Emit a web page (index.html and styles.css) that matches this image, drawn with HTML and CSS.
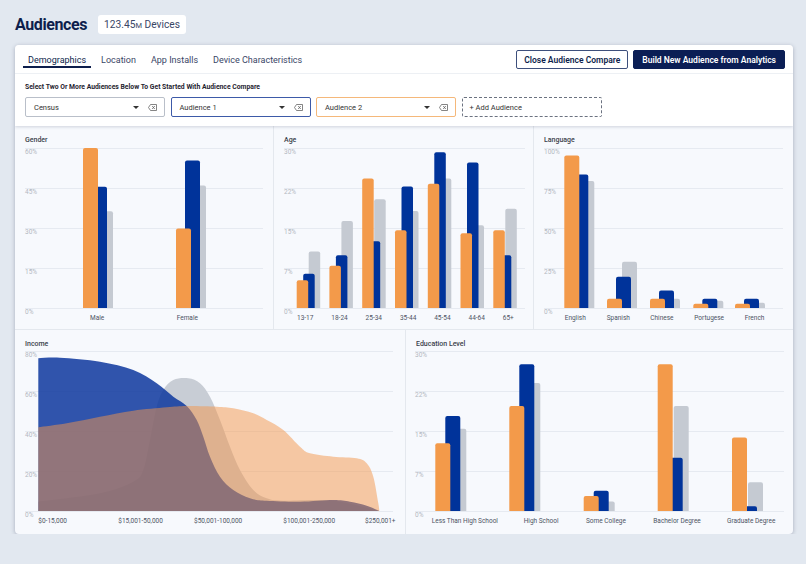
FILE: index.html
```html
<!DOCTYPE html>
<html lang="en">
<head>
    <meta charset="UTF-8">
    <meta name="viewport" content="width=device-width, initial-scale=1.0">
    <title>Audiences</title>
    <link rel="stylesheet" href="styles.css">
</head>
<body>
    <div class="page">
        <header class="top">
            <h1>Audiences</h1>
            <span class="badge">123.45<span class="unit">M</span> Devices</span>
        </header>

        <div class="card">
            <div class="controls">
                <div class="tabbar">
                    <nav class="tabs">
                        <a href="javascript:;" class="tab active">Demographics</a>
                        <a href="javascript:;" class="tab">Location</a>
                        <a href="javascript:;" class="tab">App Installs</a>
                        <a href="javascript:;" class="tab">Device Characteristics</a>
                    </nav>
                    <div class="actions">
                        <button class="btn btn-outline">Close Audience Compare</button>
                        <button class="btn btn-solid">Build New Audience from Analytics</button>
                    </div>
                </div>
                <div class="compare">
                    <p class="hint">Select Two Or More Audiences Below To Get Started With Audience Compare</p>
                    <div class="pickers">
                        <div class="picker">
                            <span class="picker-name">Census</span>
                            <span class="caret"></span>
                            <svg class="clear" width="9" height="7" viewBox="0 0 9 7"><path d="M2.5 0.5H8.5V6.5H2.5L0.5 3.5Z" fill="none" stroke="#666" stroke-width="0.8"/><path d="M4.2 2L6.8 5M6.8 2L4.2 5" stroke="#666" stroke-width="0.8"/></svg>
                        </div>
                        <div class="picker picker-blue">
                            <span class="picker-name">Audience 1</span>
                            <span class="caret"></span>
                            <svg class="clear" width="9" height="7" viewBox="0 0 9 7"><path d="M2.5 0.5H8.5V6.5H2.5L0.5 3.5Z" fill="none" stroke="#666" stroke-width="0.8"/><path d="M4.2 2L6.8 5M6.8 2L4.2 5" stroke="#666" stroke-width="0.8"/></svg>
                        </div>
                        <div class="picker picker-orange">
                            <span class="picker-name">Audience 2</span>
                            <span class="caret"></span>
                            <svg class="clear" width="9" height="7" viewBox="0 0 9 7"><path d="M2.5 0.5H8.5V6.5H2.5L0.5 3.5Z" fill="none" stroke="#666" stroke-width="0.8"/><path d="M4.2 2L6.8 5M6.8 2L4.2 5" stroke="#666" stroke-width="0.8"/></svg>
                        </div>
                        <div class="picker picker-add">+ Add Audience</div>
                    </div>
                </div>
            </div>

            <div class="charts">
                <div class="row row-top">
                    <section class="panel">
                        <h3>Gender</h3>
                        <svg id="gender" width="258" height="184"></svg>
                    </section>
                    <section class="panel">
                        <h3>Age</h3>
                        <svg id="age" width="259" height="184"></svg>
                    </section>
                    <section class="panel">
                        <h3>Language</h3>
                        <svg id="language" width="259" height="184"></svg>
                    </section>
                </div>
                <div class="row row-bottom">
                    <section class="panel">
                        <h3>Income</h3>
                        <svg id="income" width="390" height="185"></svg>
                    </section>
                    <section class="panel">
                        <h3>Education Level</h3>
                        <svg id="education" width="387" height="185"></svg>
                    </section>
                </div>
            </div>
        </div>
    </div>

    <script>
        // 网格线 + 纵轴刻度
        function grid(c) {
            var s = '';
            c.ticks.forEach(function (t, i) {
                var y = c.base - i * 40;
                s += '<line class="grid" x1="' + c.gx1 + '" x2="' + c.gx2 + '" y1="' + y + '" y2="' + y + '"/>';
                s += '<text class="tick" x="' + c.gx1 + '" y="' + (y + 6) + '">' + t + '</text>';
            });
            return s;
        }

        // 顶部圆角的柱子
        function bar(x, y, w, base) {
            var r = Math.min(2, base - y);
            return 'M' + x + ',' + base + ' V' + (y + r) + ' Q' + x + ',' + y + ' ' + (x + r) + ',' + y +
                ' H' + (x + w - r) + ' Q' + (x + w) + ',' + y + ' ' + (x + w) + ',' + (y + r) + ' V' + base + ' Z';
        }

        function barChart(id, c) {
            var s = grid(c);
            var cls = ['b-orange', 'b-blue', 'b-gray'];
            c.x.forEach(function (x0, i) {
                // 灰在最后面，橙色在最前面
                [2, 1, 0].forEach(function (k) {
                    var h = c.v[k][i] * c.scale;
                    s += '<path class="' + cls[k] + '" d="' + bar(x0 + c.off[k], c.base - h, c.bw, c.base) + '"/>';
                });
            });
            c.labels.forEach(function (l, i) {
                s += '<text class="cat" x="' + c.lx[i] + '" y="' + (c.base + 12) + '">' + l + '</text>';
            });
            document.getElementById(id).innerHTML = s;
        }

        // catmull-rom 平滑曲线
        function smooth(pts) {
            var d = 'M' + pts[0][0] + ',' + pts[0][1];
            for (var i = 0; i < pts.length - 1; i++) {
                var p0 = pts[i - 1] || pts[i], p1 = pts[i], p2 = pts[i + 1], p3 = pts[i + 2] || p2;
                d += ' C' + (p1[0] + (p2[0] - p0[0]) / 6) + ',' + (p1[1] + (p2[1] - p0[1]) / 6) + ' ' +
                    (p2[0] - (p3[0] - p1[0]) / 6) + ',' + (p2[1] - (p3[1] - p1[1]) / 6) + ' ' + p2[0] + ',' + p2[1];
            }
            return d;
        }

        barChart('gender', {
            base: 163, gx1: 10, gx2: 248, scale: 160 / 60, bw: 15, off: [0, 9, 15],
            ticks: ['0%', '15%', '30%', '45%', '60%'],
            x: [68, 161],
            v: [[60, 29.8], [45.5, 55.3], [36.3, 45.9]],
            labels: ['Male', 'Female'], lx: [75, 161.7]
        });

        barChart('age', {
            base: 163, gx1: 10, gx2: 251, scale: 160 / 30, bw: 11.5, off: [0, 6.5, 12],
            ticks: ['0%', '7%', '15%', '22%', '30%'],
            x: [22.7, 55.4, 88.2, 121, 153.8, 186.5, 219.3],
            v: [[5.2, 7.9, 24.3, 14.6, 23.3, 14, 14.6],
                [6.4, 9.9, 12.5, 22.8, 29.2, 27.3, 9.9],
                [10.6, 16.3, 20.4, 18.2, 24.3, 15.5, 18.6]],
            labels: ['13-17', '18-24', '25-34', '35-44', '45-54', '44-64', '65+'],
            lx: [23, 57.3, 91.6, 125.9, 160.2, 194.5, 228.8]
        });

        barChart('language', {
            base: 163, gx1: 10, gx2: 249, scale: 1.6, bw: 15, off: [0, 9, 15],
            ticks: ['0%', '25%', '50%', '75%', '100%'],
            x: [30.3, 73, 116, 159.3, 201],
            v: [[95.3, 5.8, 5.8, 2.7, 2.7], [83.5, 19.6, 10.9, 5.8, 5.8], [79.4, 28.9, 5.8, 4.5, 3.3]],
            labels: ['English', 'Spanish', 'Chinese', 'Portugese', 'French'],
            lx: [30.7, 72.7, 116.3, 160.3, 210.7]
        });

        barChart('education', {
            base: 162, gx1: 9, gx2: 378, scale: 160 / 30, bw: 15, off: [0, 10, 16],
            ticks: ['0%', '7%', '15%', '22%', '30%'],
            x: [29.3, 103.3, 177.7, 251.7, 326],
            v: [[12.7, 19.7, 2.8, 27.5, 13.8], [17.8, 27.5, 3.8, 10, 0.9], [15.4, 24, 1.8, 19.7, 5.4]],
            labels: ['Less Than High School', 'High School', 'Some College', 'Bachelor Degree', 'Graduate Degree'],
            lx: [25.7, 117.7, 180, 247.3, 321]
        });

        // 收入：三条面积曲线
        (function () {
            var c = { base: 162, gx1: 10, gx2: 378, ticks: ['0%', '20%', '40%', '60%', '80%'] };
            var gray = [[23.3, 152.7], [85, 144.3], [118.3, 132.7], [128.3, 121], [135, 91], [141.7, 57.7], [148.3, 41],
                [158.3, 31], [173.3, 29.3], [185, 34.3], [195, 47.7], [205, 71], [215, 97.7], [225, 121], [238.3, 141],
                [251.7, 149.3], [268.3, 151.7], [318.3, 151.7], [364.3, 162]];
            var blue = [[23.3, 9.3], [45, 8.7], [85, 12.7], [118.3, 21], [141.7, 34.3], [158.3, 47.7], [171.7, 57],
                [181.7, 71], [188.3, 87.7], [195, 107.7], [205, 127.7], [218.3, 141], [235, 149.3], [251.7, 151.7],
                [285, 152.7], [318.3, 151], [335, 152.7], [351.7, 156.7], [364.3, 162]];
            var orange = [[23.3, 78.3], [51.7, 74.3], [85, 67.7], [118.3, 61.7], [151.7, 58.3], [171.7, 57],
                [201.7, 57.7], [218.3, 59.3], [238.3, 64.3], [251.7, 71], [268.3, 81], [285, 97.7], [295, 104.3],
                [318.3, 107.7], [341.7, 109.3], [351.7, 114.3], [358.3, 127.7], [363.3, 154.3], [364.3, 162]];
            var close = ' L23.3,162 Z';
            var s = grid(c);
            s += '<path class="a-gray" d="' + smooth(gray) + close + '"/>';
            s += '<path class="a-blue" d="' + smooth(blue) + close + '"/>';
            s += '<path class="a-orange" d="' + smooth(orange) + close + '"/>';
            var labels = ['$0-15,000', '$15,001-50,000', '$50,001-100,000', '$100,001-250,000', '$250,001+'];
            var lx = [23.3, 103.3, 179, 268.3, 350];
            labels.forEach(function (l, i) {
                s += '<text class="cat" x="' + lx[i] + '" y="' + (c.base + 12) + '">' + l + '</text>';
            });
            document.getElementById('income').innerHTML = s;
        })();
    </script>
</body>
</html>
```

FILE: styles.css
```css
*{
    margin: 0;
    padding: 0;
    box-sizing: border-box;
}
body{
    background: #e2e8f0;
    font-family: Roboto, "Liberation Sans", sans-serif;
    color: #222;
}
.page{
    padding: 15px 13px 0 15px;
}

/* 标题 */
.top{
    display: flex;
    align-items: center;
    gap: 11px;
    height: 19px;
}
.top h1{
    font-size: 16px;
    line-height: 19px;
    font-weight: 700;
    letter-spacing: -0.4px;
    color: #0d1e4c;
}
.badge{
    height: 19px;
    line-height: 19px;
    padding: 0 6px;
    background: #fff;
    border-radius: 3px;
    font-size: 10.2px;
    color: #3a4666;
}
.badge .unit{
    font-size: 7.5px;
}

/* 卡片 */
.card{
    margin-top: 11px;
    background: #f7f9fd;
    border-radius: 4px;
    box-shadow: 0 1px 4px rgba(30, 40, 70, .3);
    overflow: hidden;
}
.controls{
    position: relative;
    z-index: 1;
    background: #fff;
    box-shadow: 0 1px 3px rgba(30, 40, 70, .18);
}
.tabbar{
    display: flex;
    justify-content: space-between;
    align-items: center;
    height: 29px;
    padding: 5px 8px 4px;
    border-bottom: 1px solid #edf0f4;
}
.tabs{
    display: flex;
    gap: 5px;
}
.tab{
    padding: 3px 5px 0;
    font-size: 9px;
    line-height: 12px;
    color: #3a4666;
    text-decoration: none;
    border-bottom: 2px solid transparent;
}
.tab.active{
    color: #0d1e4c;
    border-bottom-color: #0d1e4c;
}
.actions{
    display: flex;
    gap: 5px;
}
.btn{
    height: 19px;
    padding: 0 7px;
    border-radius: 2px;
    font-family: inherit;
    font-size: 8.5px;
    font-weight: 600;
    cursor: pointer;
}
.btn-outline{
    background: #fff;
    border: 1px solid #3d4f7c;
    color: #0d1e4c;
}
.btn-solid{
    background: #0b1e55;
    border: 1px solid #0b1e55;
    color: #fff;
    padding: 0 8px;
}

/* 选择受众 */
.compare{
    height: 52px;
    padding: 8px 10px 0;
}
.hint{
    font-size: 6.8px;
    line-height: 10px;
    font-weight: 700;
    color: #1f2430;
}
.pickers{
    display: flex;
    gap: 5.5px;
    margin-top: 5px;
}
.picker{
    display: flex;
    align-items: center;
    width: 140px;
    height: 20px;
    padding: 0 7px 0 8px;
    border: 1px solid #b9bfc9;
    border-radius: 2px;
    font-size: 7.5px;
    color: #333;
    background: #fff;
}
.picker-blue{
    border-color: #3d5aa8;
}
.picker-orange{
    border-color: #f5b87a;
}
.picker-add{
    border: 1px dashed #6b7280;
    padding-left: 7px;
}
.picker-name{
    flex: 1;
}
.caret{
    width: 0;
    height: 0;
    border-left: 3px solid transparent;
    border-right: 3px solid transparent;
    border-top: 3.5px solid #333;
    margin-right: 9px;
}
.clear{
    display: block;
}

/* 图表 */
.row{
    display: grid;
}
.row-top{
    grid-template-columns: 258px 260px 260px;
    border-bottom: 1px solid #e4e8ee;
}
.row-bottom{
    grid-template-columns: 390px 388px;
}
.panel + .panel{
    border-left: 1px solid #e4e8ee;
}
.panel h3{
    height: 19px;
    padding: 9px 0 0 10px;
    font-size: 7px;
    line-height: 10px;
    font-weight: 500;
    color: #3a3f4b;
}
.panel svg{
    display: block;
    overflow: visible;
}
.grid{
    stroke: #e6eaf1;
    stroke-width: 1;
    shape-rendering: crispEdges;
}
.tick{
    font-size: 6.5px;
    fill: #b3b8c1;
}
.cat{
    font-size: 6.5px;
    fill: #4d5464;
}
.b-orange{
    fill: #f39a4a;
}
.b-blue{
    fill: #00339a;
}
.b-gray{
    fill: #c5cad2;
}
.a-gray{
    fill: #c8cdd5;
}
.a-blue{
    fill: #0d379d;
    fill-opacity: .85;
}
.a-orange{
    fill: #f3964a;
    fill-opacity: .5;
}
```
